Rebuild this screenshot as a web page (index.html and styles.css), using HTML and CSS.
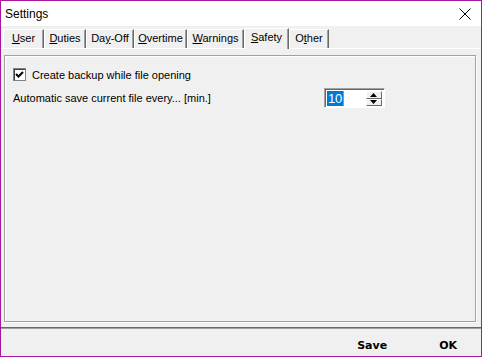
FILE: index.html
```html
<!DOCTYPE html>
<html>
<head>
<meta charset="utf-8">
<link rel="stylesheet" href="styles.css">
</head>
<body>
<div class="window">
  <div class="titlebar">
    <span class="title">Settings</span>
    <svg class="close" width="12" height="12" viewBox="0 0 12 12"><path d="M0.5 0.5 L11.5 11.5 M11.5 0.5 L0.5 11.5" stroke="#000" stroke-width="1" fill="none"/></svg>
  </div>
  <div class="tabs">
    <div class="tab w-user"><u>U</u>ser</div>
    <div class="tab w-duties"><u>D</u>uties</div>
    <div class="tab w-dayoff">Da<u>y</u>-Off</div>
    <div class="tab w-overtime"><u>O</u>vertime</div>
    <div class="tab w-warnings"><u>W</u>arnings</div>
    <div class="tab active w-safety"><u>S</u>afety</div>
    <div class="tab w-other">O<u>t</u>her</div>
  </div>
  <div class="page">
    <div class="group">
      <label class="row check-row">
        <span class="checkbox"><svg width="9" height="9" viewBox="0 0 9 9"><path d="M1 4 L3.5 6.5 L8 2" stroke="#000" stroke-width="2" fill="none"/></svg></span>
        <span>Create backup while file opening</span>
      </label>
      <div class="row save-row">
        <span>Automatic save current file every... [min.]</span>
        <div class="spin">
          <div class="spin-field"><span class="sel">10</span><span class="caret"></span></div>
          <div class="spin-btns">
            <div class="spin-btn"><svg width="7" height="4" viewBox="0 0 7 4"><path d="M3.5 0 L7 4 L0 4 Z" fill="#000"/></svg></div>
            <div class="spin-btn"><svg width="7" height="4" viewBox="0 0 7 4"><path d="M0 0 L7 0 L3.5 4 Z" fill="#000"/></svg></div>
          </div>
        </div>
      </div>
    </div>
  </div>
  <div class="footer">
    <button class="btn btn-save">Save</button>
    <button class="btn btn-ok">OK</button>
  </div>
</div>
</body>
</html>
```
FILE: styles.css
```css
* { box-sizing: border-box; }
html, body { margin: 0; padding: 0; background: #f0f0f0; }
body { font-family: "Liberation Sans", Arial, sans-serif; font-size: 11px; color: #000; }

.window {
  width: 482px;
  height: 357px;
  border: 1px solid #a5179f;
  background: #f0f0f0;
  display: flex;
  flex-direction: column;
}

.titlebar {
  height: 25px;
  background: #fff;
  display: flex;
  align-items: center;
  justify-content: space-between;
  padding: 0 10px 0 4px;
  flex: none;
}
.title { font-size: 12px; }
.close { display: block; }

.tabs {
  height: 22px;
  display: flex;
  align-items: flex-end;
  padding-left: 2px;
  flex: none;
}
.tab {
  height: 19px;
  line-height: 17px;
  text-align: center;
  border-left: 1px solid #fff;
  border-top: 1px solid #fff;
  border-right: 1px solid #696969;
  box-shadow: inset -1px 0 0 #a0a0a0;
  background: #f0f0f0;
  position: relative;
  z-index: 1;
}
.tab.active {
  height: 21px;
  line-height: 17px;
  margin-bottom: -1px;
  z-index: 2;
}
.w-user { width: 41px; }
.w-duties { width: 42px; }
.w-dayoff { width: 48px; }
.w-overtime { width: 53px; }
.w-warnings { width: 57px; }
.w-safety { width: 45px; }
.w-other { width: 40px; }

.page {
  flex: 1;
  border-top: 1px solid #fff;
  padding: 6px 5px 5px 3px;
  display: flex;
}
.group {
  flex: 1;
  border: 1px solid #a0a0a0;
  box-shadow: 1px 1px 0 #fff, inset 1px 1px 0 #fff;
  padding: 11px 0 0 8px;
  display: flex;
  flex-direction: column;
}

.row { display: flex; align-items: center; }
.check-row { height: 15px; gap: 6px; }
.checkbox {
  width: 13px;
  height: 13px;
  background: #fff;
  border: 1px solid #808080;
  box-shadow: inset 1px 1px 0 #404040;
  display: flex;
  align-items: center;
  justify-content: center;
}
.checkbox svg { display: block; }

.save-row { margin-top: 6px; height: 20px; }
.spin {
  margin-left: 113px;
  width: 61px;
  height: 20px;
  border: 1px solid #a0a0a0;
  border-right-color: #fff;
  border-bottom-color: #fff;
  box-shadow: inset 1px 1px 0 #696969;
  background: #fff;
  display: flex;
  padding: 2px 2px 1px 2px;
}
.spin-field { flex: 1; display: flex; align-items: center; }
.sel {
  background: #0078d7;
  color: #fff;
  font-size: 13px;
  line-height: 15px;
  padding: 0 1px;
}
.caret { width: 1px; height: 15px; background: #ff8000; }
.spin-btns { width: 16px; display: flex; flex-direction: column; }
.spin-btn {
  flex: 1;
  background: #f0f0f0;
  border: 1px solid #fff;
  border-right-color: #696969;
  border-bottom-color: #696969;
  display: flex;
  align-items: center;
  justify-content: center;
}
.spin-btn svg { display: block; }

.footer {
  height: 29px;
  border-top: 1px solid #696969;
  box-shadow: inset 0 1px 0 #a0a0a0;
  display: flex;
  align-items: center;
  justify-content: flex-end;
  padding: 6px 24px 0 0;
  flex: none;
}
.btn {
  background: none;
  border: none;
  padding: 0;
  font-family: "DejaVu Sans", sans-serif;
  font-weight: bold;
  font-size: 11px;
  color: #000;
}
.btn-save { margin-right: 52px; }
```
